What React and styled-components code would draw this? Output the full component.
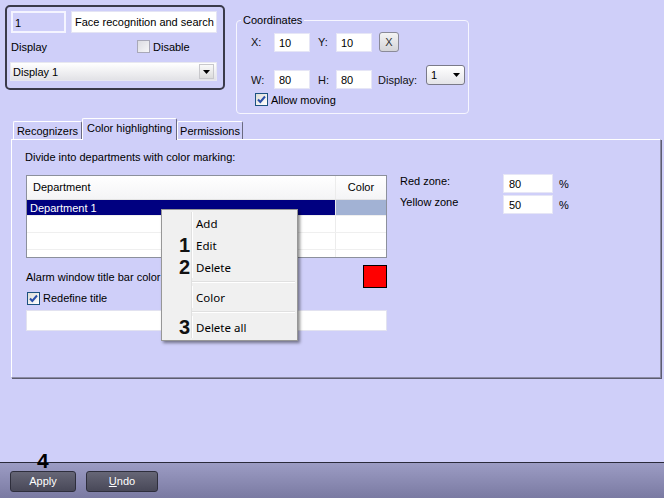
import React from 'react';
import styled, { createGlobalStyle } from 'styled-components';

const GlobalStyle = createGlobalStyle`
  * { box-sizing: border-box; }
  html, body { margin: 0; padding: 0; }
  body {
    background: #cfcff9;
    font-family: "Liberation Sans", Arial, sans-serif;
    font-size: 11px;
    color: #000;
  }
`;

const Page = styled.div`
  position: relative;
  width: 664px;
  height: 498px;
  display: flex;
  flex-direction: column;
  background: #cfcff9;
  overflow: hidden;
`;

const TopRow = styled.div`
  display: flex;
  align-items: flex-start;
  gap: 11px;
  padding: 5px 0 0 5px;
`;

const ObjectBox = styled.div`
  width: 220px;
  height: 85px;
  border: 2px solid #3a3a4a;
  border-radius: 5px;
  padding: 4px 6px 0 4px;
`;

const Line = styled.div`
  display: flex;
  align-items: center;
  gap: ${p => p.gap || 0}px;
`;

const IdField = styled.div`
  width: 55px;
  height: 22px;
  border: 2px solid #f4f4ff;
  background: #cfcff9;
  padding: 4px 2px;
  font-size: 11px;
`;

const NameField = styled.div`
  flex: 1;
  height: 22px;
  border: 1px solid #e4e4f4;
  background: #fff;
  padding: 4px 3px;
  font-size: 11px;
  white-space: nowrap;
  overflow: hidden;
`;

const DisplayRow = styled.div`
  display: grid;
  grid-template-columns: 126px auto;
  align-items: center;
  height: 27px;
  font-size: 11px;
`;

const WideSelect = styled.div`
  margin: 2px 0 0 -1px;
  height: 19px;
  display: flex;
  align-items: center;
  justify-content: space-between;
  padding: 0 2px 0 2px;
  border: 1px solid #e8e8f0;
  background: linear-gradient(#ffffff, #e2e2e6);
  font-size: 11px;
`;

const ArrowBtn = styled.div`
  width: 15px;
  height: 15px;
  display: flex;
  align-items: center;
  justify-content: center;
  border: 1px solid #c8c8cc;
  background: linear-gradient(#fafafa, #dcdcdc);
`;

const Group = styled.fieldset`
  margin: 9px 0 0 0;
  padding: 0;
  width: 233px;
  height: 100px;
  border: 1px solid #f6f6ff;
  border-radius: 4px;
`;

const Legend = styled.legend`
  margin-left: 4px;
  padding: 0 2px;
  font-size: 11px;
`;

const GroupBody = styled.div`
  padding: 6px 0 0 14px;
`;

const CoordRow = styled.div`
  display: flex;
  align-items: ${p => p.align || 'center'};
  height: ${p => p.h}px;
  margin-top: ${p => p.mt || 0}px;
`;

const FieldLabel = styled.span`
  display: inline-block;
  width: ${p => p.w}px;
  margin-left: ${p => p.ml || 0}px;
  margin-bottom: ${p => p.mb || 0}px;
  font-size: 11px;
  color: #111;
`;

const NumInput = styled.div`
  width: ${p => p.w || 36}px;
  height: 19px;
  border: 1px solid #e6e6f6;
  background: #fff;
  padding: 3px 4px;
  font-size: 11px;
`;

const SmallBtn = styled.div`
  width: 20px;
  height: 20px;
  margin-left: 7px;
  border: 1px solid #8a8a98;
  border-radius: 3px;
  background: linear-gradient(#f4f4f4, #d4d4d8);
  display: flex;
  align-items: center;
  justify-content: center;
  font-size: 11px;
  color: #333;
`;

const MiniSelect = styled.div`
  width: 39px;
  height: 20px;
  margin-bottom: 4px;
  border: 1px solid #7a7a88;
  border-radius: 3px;
  background: linear-gradient(#ffffff, #e4e4e8);
  display: flex;
  align-items: center;
  justify-content: space-between;
  padding: 0 4px 0 4px;
  font-size: 11px;
`;

const Check = styled.label`
  display: inline-flex;
  align-items: center;
  gap: 3px;
  margin-left: ${p => p.ml || 0}px;
  font-size: 11px;
  color: #000;
`;

const Box = styled.span`
  width: 13px;
  height: 13px;
  border: 1px solid ${p => (p.disabled ? '#a8a8b8' : '#1c5180')};
  background: ${p => (p.disabled ? 'linear-gradient(135deg, #dcdce2, #f6f6f8)' : 'linear-gradient(135deg, #dcdcd6, #ffffff)')};
  display: inline-flex;
  align-items: center;
  justify-content: center;
`;

const TabStrip = styled.div`
  display: flex;
  align-items: flex-end;
  height: 21px;
  margin-top: 4px;
  padding-left: 13px;
  position: relative;
  z-index: 1;
`;

const Tab = styled.div`
  width: ${p => p.w}px;
  height: ${p => (p.active ? 22 : 18)}px;
  margin-bottom: ${p => (p.active ? -1 : 0)}px;
  display: flex;
  align-items: center;
  justify-content: center;
  padding-bottom: ${p => (p.active ? 3 : 0)}px;
  border-top: 1px solid #ffffff;
  border-left: 1px solid #ffffff;
  border-right: 1px solid #6a6a80;
  border-radius: 2px 2px 0 0;
  background: #cfcff9;
  font-size: 11px;
`;

const Panel = styled.div`
  margin: 0 3px 0 11px;
  height: 239px;
  border-top: 1px solid #ffffff;
  border-left: 1px solid #ffffff;
  border-right: 1px solid #8c8ca6;
  border-bottom: 1px solid #8c8ca6;
  box-shadow: 1px 1px 0 #5c5c70;
  padding: 11px 0 0 13px;
`;

const PanelTitle = styled.div`
  line-height: 13px;
  font-size: 11px;
`;

const BodyRow = styled.div`
  display: flex;
  align-items: flex-start;
  margin-top: 11px;
`;

const Table = styled.div`
  width: 361px;
  height: 83px;
  margin-left: 1px;
  border: 1px solid #8c909c;
  background: #fff;
  overflow: hidden;
`;

const TRow = styled.div`
  display: grid;
  grid-template-columns: 309px 50px;
  height: ${p => p.h}px;
  border-bottom: 1px solid ${p => (p.head ? '#e4e4e4' : '#efefef')};
  background: ${p => (p.head ? 'linear-gradient(#ffffff, #f4f4f6)' : '#fff')};
`;

const TCell = styled.div`
  display: flex;
  align-items: center;
  justify-content: ${p => (p.center ? 'center' : 'flex-start')};
  padding-left: ${p => (p.center ? 0 : p.tight ? 3 : 6)}px;
  border-right: ${p => (p.last ? 'none' : '1px solid #ececec')};
  background: ${p => p.bg || 'transparent'};
  color: ${p => p.fg || '#000'};
  font-size: 11px;
  padding-bottom: ${p => (p.head ? 1 : 0)}px;
`;

const ZoneGrid = styled.div`
  display: grid;
  grid-template-columns: 97px 50px auto;
  grid-auto-rows: 19px;
  column-gap: 6px;
  row-gap: 2px;
  margin: -1px 0 0 13px;
  align-items: center;
`;

const ZoneLabel = styled.span`
  align-self: start;
  padding-top: 1px;
  font-size: 11px;
`;

const ZoneInput = styled.div`
  height: 19px;
  border: 1px solid #e6e6f6;
  background: #fff;
  padding: 3px 5px;
  font-size: 11px;
`;

const AlarmRow = styled.div`
  width: 361px;
  height: 23px;
  margin: 7px 0 0 1px;
  display: flex;
  align-items: center;
  justify-content: space-between;
  font-size: 11px;
`;

const Swatch = styled.div`
  width: 24px;
  height: 23px;
  background: #ff0000;
  border: 1px solid #000;
`;

const CheckLine = styled.div`
  margin-top: 3px;
  height: 14px;
  display: flex;
  align-items: center;
`;

const TitleInput = styled.div`
  width: 361px;
  height: 21px;
  margin: 5px 0 0 1px;
  border: 1px solid #e2e2f0;
  background: #fff;
`;

const Menu = styled.div`
  position: absolute;
  left: 161px;
  top: 209px;
  width: 137px;
  padding: 2px 2px 2px 2px;
  background: #f0f0f0;
  border: 1px solid #979797;
  box-shadow: 2px 2px 3px rgba(0, 0, 0, 0.45);
  font-family: "Noto Sans", "Open Sans", sans-serif;
  z-index: 5;
`;

const MenuItem = styled.div`
  display: grid;
  grid-template-columns: 27px 1fr;
  height: 22px;
`;

const Gutter = styled.div`
  display: flex;
  align-items: center;
  justify-content: flex-end;
  padding-right: 1px;
  font-family: "Liberation Sans", Arial, sans-serif;
  font-weight: bold;
  font-size: 20px;
  line-height: 1;
  color: #111;
`;

const ItemText = styled.div`
  display: flex;
  align-items: center;
  padding-left: 4px;
  border-left: 1px solid #e0e0e0;
  box-shadow: inset 1px 0 0 #ffffff;
  font-size: 11.5px;
  color: #000;
`;

const Separator = styled.div`
  display: grid;
  grid-template-columns: 27px 1fr;
  height: 8px;
  &::after {
    content: '';
    grid-column: 2;
    border-left: 1px solid #e0e0e0;
    background: linear-gradient(transparent 3px, #e0e0e0 3px, #e0e0e0 4px, #ffffff 4px, #ffffff 5px, transparent 5px);
  }
`;

const BottomBar = styled.div`
  margin-top: auto;
  height: 36px;
  border-top: 1px solid #2a2a3a;
  background: linear-gradient(#9c9cc4, #7a7aa2);
  display: flex;
  gap: 10px;
  padding: 8px 0 0 10px;
`;

const BarButton = styled.div`
  width: ${p => p.w}px;
  height: 21px;
  border: 1px solid #2e2e3c;
  border-radius: 3px;
  background: linear-gradient(#666676, #484858);
  color: #fff;
  font-size: 11px;
  display: flex;
  align-items: center;
  justify-content: center;
  padding-bottom: 1px;
`;

const Callout = styled.span`
  position: absolute;
  left: 37px;
  top: 450px;
  font-weight: bold;
  font-size: 21px;
  line-height: 1;
  color: #000;
  z-index: 3;
`;

const DownArrow = () => (
  <svg width="7" height="4" viewBox="0 0 7 4">
    <path d="M0 0h7L3.5 4z" fill="#000" />
  </svg>
);

const CheckBox = ({ checked, disabled, label, ml }) => (
  <Check ml={ml}>
    <Box disabled={disabled}>
      {checked && (
        <svg width="9" height="9" viewBox="0 0 9 9">
          <path d="M1 4.5l2.3 2.5L8 1.5" fill="none" stroke="#2a4ea8" strokeWidth="2" />
        </svg>
      )}
    </Box>
    {label}
  </Check>
);

const menuItems = [
  { text: 'Add' },
  { text: 'Edit', n: '1' },
  { text: 'Delete', n: '2' },
  { sep: true },
  { text: 'Color' },
  { sep: true },
  { text: 'Delete all', n: '3' },
];

export default function App() {
  return (
    <Page>
      <GlobalStyle />
      <TopRow>
        <ObjectBox>
          <Line gap={5}>
            <IdField>1</IdField>
            <NameField>Face recognition and search 1</NameField>
          </Line>
          <DisplayRow>
            <span>Display</span>
            <CheckBox disabled label="Disable" />
          </DisplayRow>
          <WideSelect>
            <span>Display 1</span>
            <ArrowBtn><DownArrow /></ArrowBtn>
          </WideSelect>
        </ObjectBox>

        <Group>
          <Legend>Coordinates</Legend>
          <GroupBody>
            <CoordRow h={20}>
              <FieldLabel w={23}>X:</FieldLabel>
              <NumInput>10</NumInput>
              <FieldLabel w={18} ml={8}>Y:</FieldLabel>
              <NumInput>10</NumInput>
              <SmallBtn>X</SmallBtn>
            </CoordRow>
            <CoordRow h={24} mt={13} align="flex-end">
              <FieldLabel w={23} mb={3}>W:</FieldLabel>
              <NumInput>80</NumInput>
              <FieldLabel w={18} ml={8} mb={3}>H:</FieldLabel>
              <NumInput>80</NumInput>
              <FieldLabel w={48} ml={6} mb={3}>Display:</FieldLabel>
              <MiniSelect>
                <span>1</span>
                <DownArrow />
              </MiniSelect>
            </CoordRow>
            <CoordRow h={13} mt={4}>
              <CheckBox checked label="Allow moving" ml={4} />
            </CoordRow>
          </GroupBody>
        </Group>
      </TopRow>

      <TabStrip>
        <Tab w={69}>Recognizers</Tab>
        <Tab w={95} active>Color highlighting</Tab>
        <Tab w={66}>Permissions</Tab>
      </TabStrip>

      <Panel>
        <PanelTitle>Divide into departments with color marking:</PanelTitle>
        <BodyRow>
          <Table>
            <TRow head h={24}>
              <TCell head>Department</TCell>
              <TCell head center last>Color</TCell>
            </TRow>
            <TRow h={16}>
              <TCell tight bg="#000080" fg="#fff">Department 1</TCell>
              <TCell bg="#a2b2d4" last />
            </TRow>
            <TRow h={17}>
              <TCell />
              <TCell last />
            </TRow>
            <TRow h={17}>
              <TCell />
              <TCell last />
            </TRow>
            <TRow h={17}>
              <TCell />
              <TCell last />
            </TRow>
          </Table>
          <ZoneGrid>
            <ZoneLabel>Red zone:</ZoneLabel>
            <ZoneInput>80</ZoneInput>
            <span>%</span>
            <ZoneLabel>Yellow zone</ZoneLabel>
            <ZoneInput>50</ZoneInput>
            <span>%</span>
          </ZoneGrid>
        </BodyRow>
        <AlarmRow>
          <span>Alarm window title bar color:</span>
          <Swatch />
        </AlarmRow>
        <CheckLine>
          <CheckBox checked label="Redefine title" ml={2} />
        </CheckLine>
        <TitleInput />
      </Panel>

      <Menu>
        {menuItems.map((it, i) =>
          it.sep ? (
            <Separator key={i} />
          ) : (
            <MenuItem key={i}>
              <Gutter>{it.n}</Gutter>
              <ItemText>{it.text}</ItemText>
            </MenuItem>
          )
        )}
      </Menu>

      <BottomBar>
        <BarButton w={66}>Apply</BarButton>
        <BarButton w={72}><span><u>U</u>ndo</span></BarButton>
      </BottomBar>
      <Callout>4</Callout>
    </Page>
  );
}
